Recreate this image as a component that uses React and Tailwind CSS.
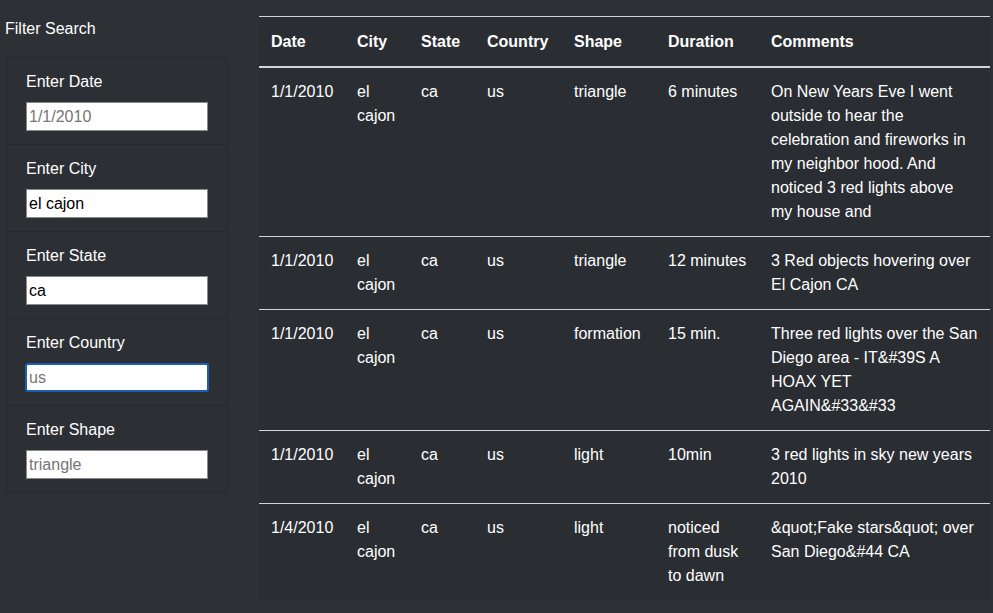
const sightings = [
  {
    datetime: '1/1/2010',
    city: 'el cajon',
    state: 'ca',
    country: 'us',
    shape: 'triangle',
    duration: '6 minutes',
    comments:
      'On New Years Eve I went outside to hear the celebration and fireworks in my neighbor hood. And noticed 3 red lights above my house and',
  },
  {
    datetime: '1/1/2010',
    city: 'el cajon',
    state: 'ca',
    country: 'us',
    shape: 'triangle',
    duration: '12 minutes',
    comments: '3 Red objects hovering over El Cajon CA',
  },
  {
    datetime: '1/1/2010',
    city: 'el cajon',
    state: 'ca',
    country: 'us',
    shape: 'formation',
    duration: '15 min.',
    comments: 'Three red lights over the San Diego area - IT&#39S A HOAX YET AGAIN&#33&#33',
  },
  {
    datetime: '1/1/2010',
    city: 'el cajon',
    state: 'ca',
    country: 'us',
    shape: 'light',
    duration: '10min',
    comments: '3 red lights in sky new years 2010',
  },
  {
    datetime: '1/4/2010',
    city: 'el cajon',
    state: 'ca',
    country: 'us',
    shape: 'light',
    duration: 'noticed from dusk to dawn',
    comments: '&quot;Fake stars&quot; over San Diego&#44 CA',
  },
];

const filters = [
  { label: 'Enter Date', placeholder: '1/1/2010', value: '' },
  { label: 'Enter City', placeholder: 'el cajon', value: 'el cajon' },
  { label: 'Enter State', placeholder: 'ca', value: 'ca' },
  { label: 'Enter Country', placeholder: 'us', value: '', focused: true },
  { label: 'Enter Shape', placeholder: 'triangle', value: '' },
];

function FilterItem({ filter, first }) {
  return (
    <li className={`pl-[19px] pr-5 pt-3 pb-[13px] ${first ? '' : 'border-t border-[#24272b]'}`}>
      <label className="block text-base leading-6 text-white">{filter.label}</label>
      <input
        type="text"
        defaultValue={filter.value}
        placeholder={filter.placeholder}
        className={`mt-2 block h-[29px] w-[182px] bg-white text-base text-black placeholder:text-[#767676] outline-none ${
          filter.focused
            ? '-mx-[1px] w-[184px] rounded-[3px] border-2 border-[#1b5fb5] px-[2px]'
            : 'border border-[#8a8a8a] px-[2px]'
        }`}
      />
    </li>
  );
}

export default function App() {
  return (
    <div className="min-h-screen bg-[#2d3136] font-['Liberation_Sans',Arial,sans-serif] text-white">
      <div className="flex">
        {/* filters */}
        <div className="w-[259px] shrink-0">
          <h5 className="ml-[5px] mt-[17px] text-base leading-6">Filter Search</h5>
          <ul className="ml-[6px] mt-[16px] w-[222px] rounded border border-[#25282c] bg-[#2c3035]">
            {filters.map((f, i) => (
              <FilterItem key={f.label} filter={f} first={i === 0} />
            ))}
          </ul>
        </div>

        {/* results */}
        <div className="mt-[16px]">
          <table className="w-[731px] table-fixed border-collapse bg-[#2a2d32] text-left text-base leading-6">
            <colgroup>
              <col className="w-[86px]" />
              <col className="w-[64px]" />
              <col className="w-[66px]" />
              <col className="w-[87px]" />
              <col className="w-[94px]" />
              <col className="w-[103px]" />
              <col className="w-[231px]" />
            </colgroup>
            <thead>
              <tr className="border-t border-[#d3d6d9]">
                {['Date', 'City', 'State', 'Country', 'Shape', 'Duration', 'Comments'].map((h) => (
                  <th key={h} className="border-b-2 border-[#d3d6d9] px-3 pt-[13px] pb-3 align-bottom font-bold">
                    {h}
                  </th>
                ))}
              </tr>
            </thead>
            <tbody>
              {sightings.map((s, i) => (
                <tr key={i} className={i === 0 ? '' : 'border-t border-[#d3d6d9]'}>
                  <td className="p-3 align-top">{s.datetime}</td>
                  <td className="p-3 align-top">{s.city}</td>
                  <td className="p-3 align-top">{s.state}</td>
                  <td className="p-3 align-top">{s.country}</td>
                  <td className="p-3 align-top">{s.shape}</td>
                  <td className="p-3 align-top">{s.duration}</td>
                  <td className="p-3 align-top">{s.comments}</td>
                </tr>
              ))}
            </tbody>
          </table>
        </div>
      </div>
    </div>
  );
}
